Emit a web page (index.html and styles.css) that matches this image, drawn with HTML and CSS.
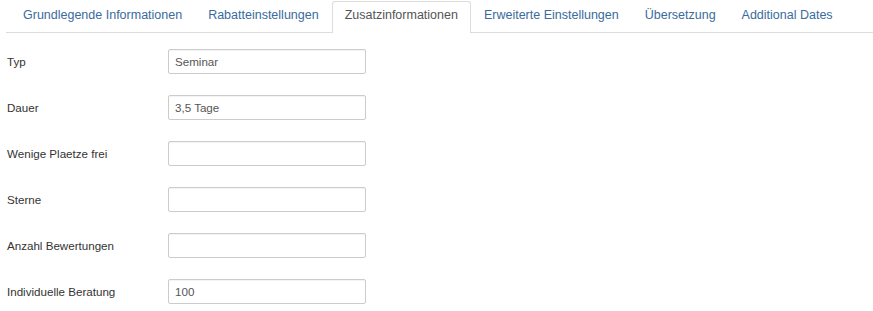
FILE: index.html
```html
<!DOCTYPE html>
<html lang="de">
<head>
<meta charset="utf-8">
<title>Zusatzinformationen</title>
<link rel="stylesheet" href="styles.css">
</head>
<body>
<div class="page">
  <ul class="tabs">
    <li class="tab"><a href="#">Grundlegende Informationen</a></li>
    <li class="tab"><a href="#">Rabatteinstellungen</a></li>
    <li class="tab active"><a href="#">Zusatzinformationen</a></li>
    <li class="tab"><a href="#">Erweiterte Einstellungen</a></li>
    <li class="tab"><a href="#">Übersetzung</a></li>
    <li class="tab"><a href="#">Additional Dates</a></li>
  </ul>
  <form class="form">
    <div class="row"><label class="label">Typ</label><input class="field" type="text" value="Seminar"></div>
    <div class="row"><label class="label">Dauer</label><input class="field" type="text" value="3,5 Tage"></div>
    <div class="row"><label class="label">Wenige Plaetze frei</label><input class="field" type="text" value=""></div>
    <div class="row"><label class="label">Sterne</label><input class="field" type="text" value=""></div>
    <div class="row"><label class="label">Anzahl Bewertungen</label><input class="field" type="text" value=""></div>
    <div class="row"><label class="label">Individuelle Beratung</label><input class="field" type="text" value="100"></div>
  </form>
</div>
</body>
</html>
```
FILE: styles.css
```css
html, body {
  margin: 0;
  padding: 0;
  background: #fff;
}
body {
  font-family: "Liberation Sans", Arial, sans-serif;
  color: #333;
}
.page {
  padding: 1px 0 0 6px;
}
.tabs {
  list-style: none;
  margin: 0;
  padding: 0 0 0 4px;
  display: flex;
  border-bottom: 1px solid #ddd;
  height: 31px;
}
.tab {
  flex: 0 0 auto;
  margin-right: 0;
  margin-bottom: -1px;
  white-space: nowrap;
}
.tab a {
  display: block;
  height: 30px;
  line-height: 27px;
  padding: 0 12px;
  font-size: 12.5px;
  color: #3a6b9c;
  text-decoration: none;
  border: 1px solid transparent;
  border-bottom: none;
  border-radius: 3px 3px 0 0;
  box-sizing: content-box;
}
.tab.active a {
  color: #555;
  background: #fff;
  border-color: #ddd;
  height: 31px;
}
.form {
  margin: 16px 0 0 0;
  display: flex;
  flex-direction: column;
  gap: 21px;
}
.row {
  display: flex;
  align-items: center;
}
.label {
  flex: 0 0 162px;
  padding-left: 1px;
  box-sizing: border-box;
  font-size: 11.6px;
  color: #333;
  white-space: nowrap;
}
.field {
  flex: 0 0 198px;
  width: 198px;
  height: 25px;
  box-sizing: border-box;
  margin: 0;
  padding: 0 6px;
  border: 1px solid #ccc;
  border-radius: 2px;
  box-shadow: inset 0 1px 1px rgba(0,0,0,0.05);
  font-family: "Liberation Sans", Arial, sans-serif;
  font-size: 11.6px;
  color: #555;
  background: #fff;
}
```
